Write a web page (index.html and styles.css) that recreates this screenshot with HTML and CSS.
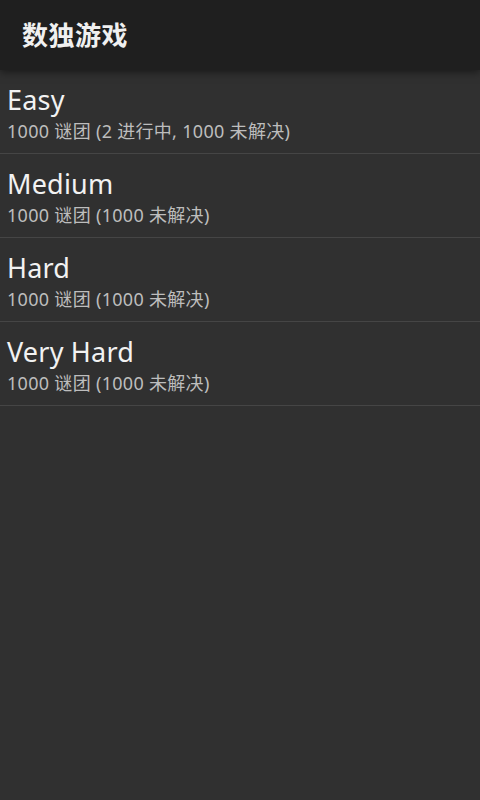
FILE: index.html
```html
<!DOCTYPE html>
<html lang="zh">
<head>
<meta charset="utf-8">
<link rel="stylesheet" href="styles.css">
</head>
<body>
<header class="bar"><h1 class="bar-title">数独游戏</h1></header>
<ul class="list">
  <li class="item"><div class="item-title">Easy</div><div class="item-sub">1000 谜团 (2 进行中, 1000 未解决)</div></li>
  <li class="item"><div class="item-title">Medium</div><div class="item-sub">1000 谜团 (1000 未解决)</div></li>
  <li class="item"><div class="item-title">Hard</div><div class="item-sub">1000 谜团 (1000 未解决)</div></li>
  <li class="item"><div class="item-title">Very Hard</div><div class="item-sub">1000 谜团 (1000 未解决)</div></li>
</ul>
</body>
</html>
```
FILE: styles.css
```css
html, body { margin: 0; padding: 0; }
body {
  width: 480px; height: 800px; overflow: hidden;
  background: #303030;
  font-family: "Noto Sans", "Noto Sans CJK SC", sans-serif;
  color: #fff;
}
.bar {
  height: 70px;
  background: #1f1f1f;
  display: flex; align-items: center;
  padding-left: 22px;
  position: relative;
  box-shadow: 0 2px 8px rgba(0,0,0,0.5);
}
.bar-title {
  margin: 0; font-size: 26px; font-weight: 700;
  font-family: "Noto Sans CJK SC", sans-serif;
  color: #f0f0f0; letter-spacing: 0.5px;
  margin-top: -4px;
}
.list { list-style: none; margin: 0; padding: 0; }
.item {
  height: 69px;
  padding-top: 14px;
  border-bottom: 1px solid #454545;
  padding-left: 7px;
  display: flex; flex-direction: column;
  box-sizing: content-box;
}
.item-title { font-size: 27px; line-height: 32px; color: #f2f2f2; letter-spacing: 0.2px; }
.item-sub { font-size: 18px; line-height: 24px; margin-top: 3px; color: #bdbdbd; letter-spacing: 0.3px; }
```
